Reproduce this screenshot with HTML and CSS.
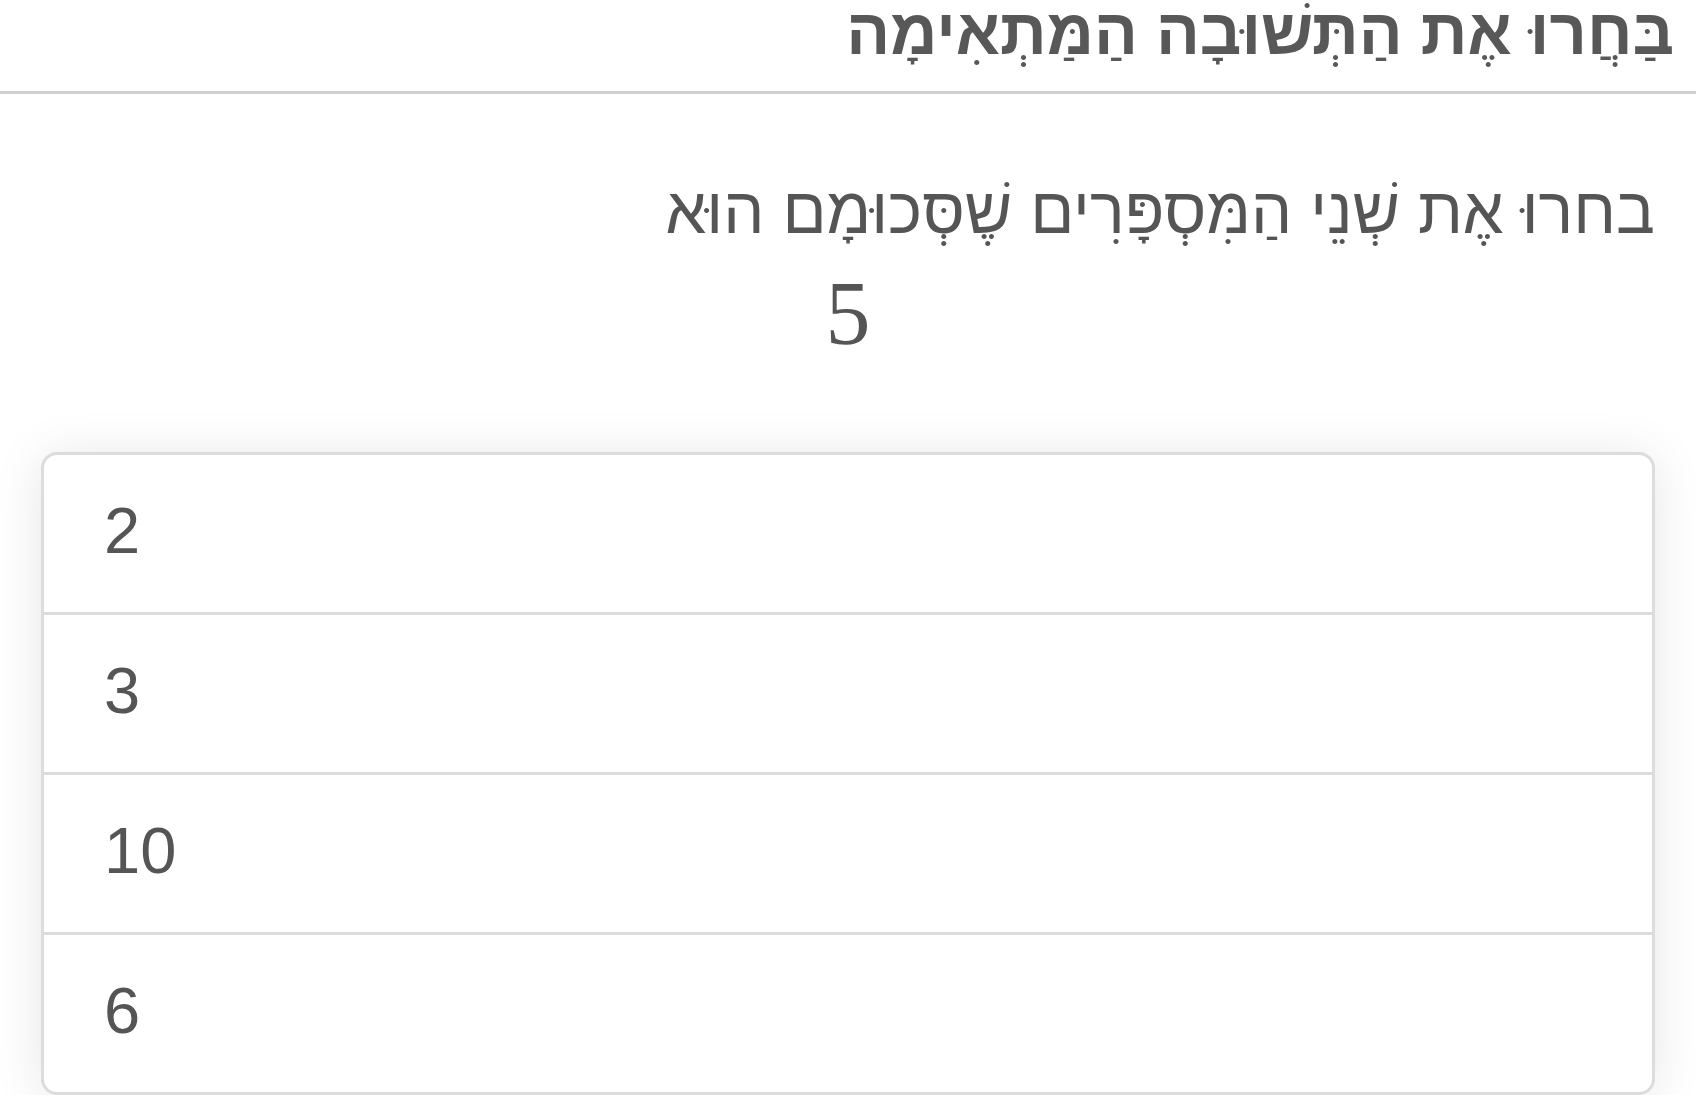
FILE: index.html
```html
<!DOCTYPE html>
<html lang="he" dir="rtl">
<head>
    <meta charset="UTF-8">
    <meta name="viewport" content="width=device-width, initial-scale=1.0">
    <title>בחירת תשובה</title>
    <link rel="stylesheet" href="styles.css">
</head>
<body>
    <header class="top-bar">
        <h1>בַּחֲרוּ אֶת הַתְּשׁוּבָה הַמַּתְאִימָה</h1>
    </header>

    <main class="question">
        <p class="prompt">בחרוּ אֶת שְׁנֵי הַמִּסְפָּרִים שֶׁסְּכוּמָם הוּא</p>
        <div class="math">5</div>

        <ul class="answers" dir="ltr">
            <li class="answer">2</li>
            <li class="answer">3</li>
            <li class="answer">10</li>
            <li class="answer">6</li>
        </ul>
    </main>
</body>
</html>
```

FILE: styles.css
```css
body {
    font-family: 'Liberation Sans', Arial, sans-serif;
    background: #fff;
    color: #555;
    margin: 0;
    padding: 0;
}

.top-bar {
    height: 91px;
    padding-right: 22px;
    border-bottom: 3px solid #cfcfcf;
}

.top-bar h1 {
    margin: 0;
    font-size: 65px;
    line-height: 63px;
    font-weight: bold;
    color: #585858;
}

.question {
    padding: 0 41px;
}

.prompt {
    margin: 81px 0 0;
    font-size: 65px;
    line-height: 72px;
}

/* the number in the question, set like a formula */
.math {
    margin-top: 17px;
    font-family: 'Liberation Serif', 'Times New Roman', serif;
    font-size: 90px;
    line-height: 100px;
    text-align: center;
}

.answers {
    list-style: none;
    margin: 88px 0 0;
    padding: 0;
    border: 3px solid #dcdcdc;
    border-radius: 16px;
    overflow: hidden;
    background: #fff;
    box-shadow: 0 4px 50px rgba(0, 0, 0, 0.1);
}

.answer {
    display: flex;
    align-items: center;
    height: 160px;
    box-sizing: border-box;
    padding: 0 0 6px 60px;
    font-size: 65px;
    border-bottom: 3px solid #dcdcdc;
    cursor: pointer;
}

.answer:last-child {
    border-bottom: none;
    height: 157px;
}
```
